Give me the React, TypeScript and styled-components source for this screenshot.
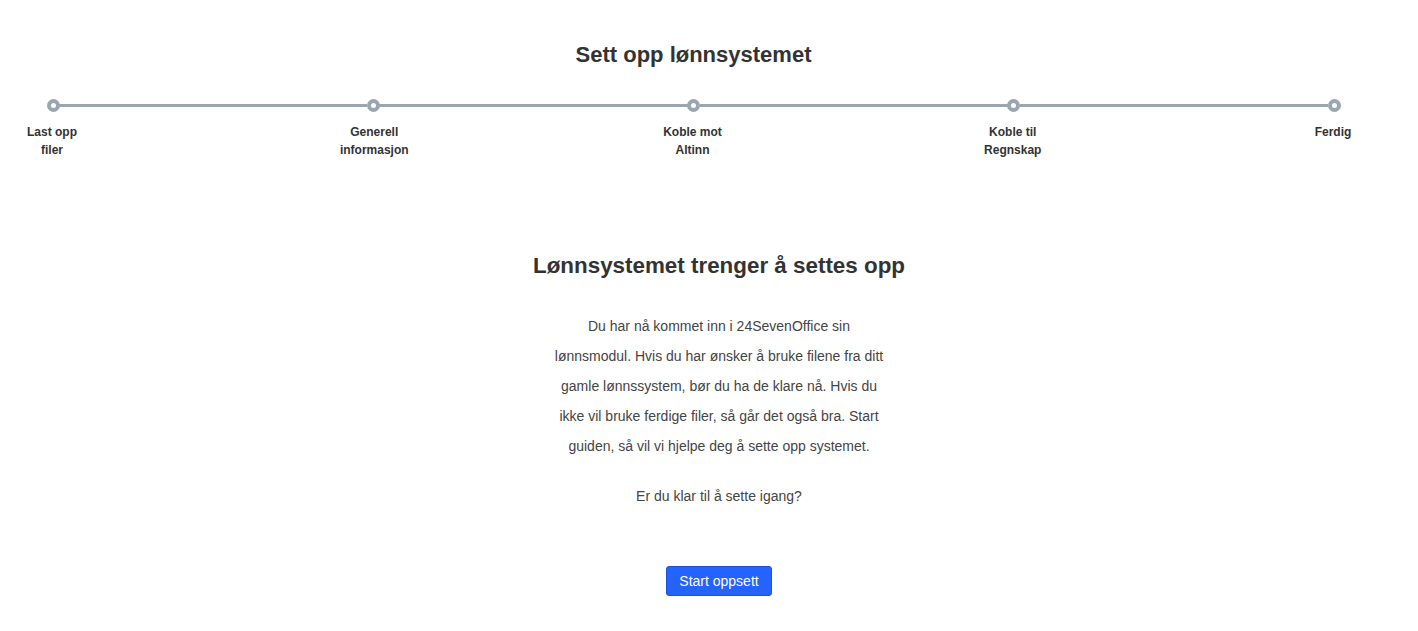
import React from 'react';
import styled, { createGlobalStyle } from 'styled-components';

const GlobalStyle = createGlobalStyle`
  body {
    margin: 0;
    background: #fff;
    font-family: 'Liberation Sans', Arial, sans-serif;
    color: #333;
  }
`;

const Page = styled.div`
  width: 1418px;
  padding-top: 41px;
`;

const Header = styled.div`
  width: 1387px;
`;

const Title = styled.h1`
  margin: 0;
  font-size: 22px;
  line-height: 28px;
  font-weight: 700;
  text-align: center;
  color: #333;
`;

const Stepper = styled.ol`
  list-style: none;
  display: flex;
  align-items: flex-start;
  margin: 30px 0 0;
  padding: 0 13px;
`;

const Step = styled.li`
  width: 80px;
  flex: none;
  display: flex;
  flex-direction: column;
  align-items: center;
`;

const Dot = styled.span`
  box-sizing: border-box;
  width: 13px;
  height: 13px;
  border: 4px solid #9ba6b1;
  border-radius: 50%;
  background: #fff;
`;

const Connector = styled.li`
  flex: 1;
  height: 3px;
  margin: 5px -34px 0;
  background: #9ba6b1;
`;

const Label = styled.span<{ $shift?: number }>`
  margin-top: 11px;
  margin-left: ${(p) => (p.$shift ?? 0) * 2}px;
  font-size: 12px;
  line-height: 18px;
  font-weight: 700;
  text-align: center;
  color: #333;
  white-space: pre-line;
`;

const Main = styled.main`
  margin-top: 92px;
  padding-left: 20px;
  display: flex;
  flex-direction: column;
  align-items: center;
`;

const Heading = styled.h2`
  margin: 0;
  font-size: 22.4px;
  line-height: 30px;
  font-weight: 700;
  color: #333;
`;

const Text = styled.p<{ $gap?: number }>`
  width: 336px;
  margin: ${(p) => p.$gap ?? 0}px 0 0;
  font-size: 14px;
  line-height: 30px;
  text-align: center;
  color: #444;
`;

const StartButton = styled.button`
  margin-top: 55px;
  height: 30px;
  padding: 0 12px;
  border: 1px solid #1d50d6;
  border-radius: 3px;
  background: #2563ff;
  color: #fff;
  font-family: inherit;
  font-size: 14px;
  cursor: pointer;
`;

const steps = [
  { label: 'Last opp\nfiler', shift: -1 },
  { label: 'Generell\ninformasjon', shift: 1 },
  { label: 'Koble mot\nAltinn', shift: -1 },
  { label: 'Koble til\nRegnskap', shift: -1 },
  { label: 'Ferdig', shift: -1 },
];

function App() {
  return (
    <Page>
      <GlobalStyle />
      <Header>
        <Title>Sett opp lønnsystemet</Title>
        <Stepper>
          {steps.map((s, i) => (
            <React.Fragment key={s.label}>
              {i > 0 && <Connector aria-hidden />}
              <Step>
                <Dot />
                <Label $shift={s.shift}>{s.label}</Label>
              </Step>
            </React.Fragment>
          ))}
        </Stepper>
      </Header>
      <Main>
        <Heading>Lønnsystemet trenger å settes opp</Heading>
        <Text $gap={30}>
          Du har nå kommet inn i 24SevenOffice sin lønnsmodul. Hvis du har ønsker å bruke filene fra ditt
          gamle lønnssystem, bør du ha de klare nå. Hvis du ikke vil bruke ferdige filer, så går det også
          bra. Start guiden, så vil vi hjelpe deg å sette opp systemet.
        </Text>
        <Text $gap={20}>Er du klar til å sette igang?</Text>
        <StartButton>Start oppsett</StartButton>
      </Main>
    </Page>
  );
}

export default App;
